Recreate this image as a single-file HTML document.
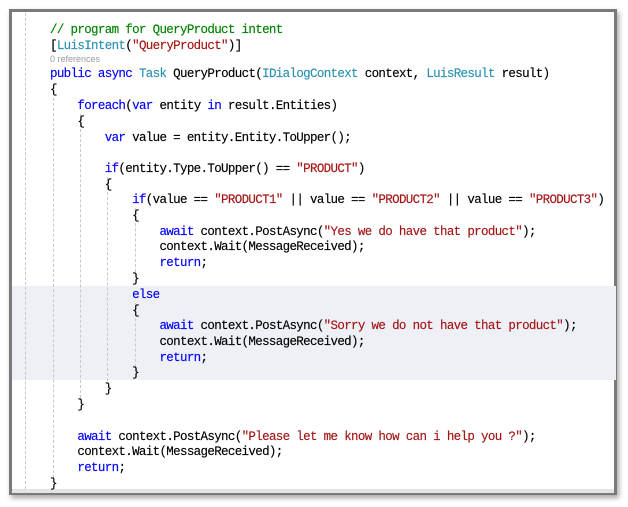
<!DOCTYPE html>
<html><head><style>
body{margin:0;width:628px;height:507px;background:#fff;position:relative;overflow:hidden}
.frame{position:absolute;left:9px;top:9px;width:608px;height:486px;border:3px solid #7a7a7a;box-shadow:2px 3px 5px rgba(0,0,0,.35);background:#fff;box-sizing:border-box}
.strip{position:absolute;left:12px;top:489px;width:602px;height:4px;background:#e4e4e4}
.band{position:absolute;left:12px;top:286px;width:604px;height:94px;background:#eff0f6}
.d{position:absolute;width:0;border-left:1px dashed #c8c8c8}
.l{position:absolute;left:50px;font-family:"Liberation Mono",monospace;font-size:12.5px;letter-spacing:-0.66px;white-space:pre;color:#000;line-height:14px;-webkit-text-stroke:0.15px}
.k{color:#0000ff}.t{color:#2b91af}.s{color:#a31515}.c{color:#008000}
.ref{position:absolute;left:50px;top:54px;font-family:"Liberation Sans",sans-serif;font-size:9px;color:#999}
</style></head><body>
<div class="frame"></div>
<div class="band"></div>
<div class="strip"></div>
<div class="d" style="left:25px;top:13px;height:476px"></div>
<div class="d" style="left:53px;top:98px;height:380px"></div>
<div class="d" style="left:80px;top:114px;height:284px"></div>
<div class="d" style="left:107px;top:177px;height:204px"></div>
<div class="d" style="left:135px;top:208px;height:64px"></div>
<div class="d" style="left:135px;top:303px;height:64px"></div>
<div class="l c" style="top:23px">// program for QueryProduct intent</div>
<div class="l" style="top:39px">[<span class="t">LuisIntent</span>(<span class="s">"QueryProduct"</span>)]</div>
<div class="ref">0 references</div>
<div class="l" style="top:67px"><span class="k">public</span> <span class="k">async</span> <span class="t">Task</span> QueryProduct(<span class="t">IDialogContext</span> context, <span class="t">LuisResult</span> result)</div>
<div class="l" style="top:83px">{</div>
<div class="l" style="top:99px">    <span class="k">foreach</span>(<span class="k">var</span> entity <span class="k">in</span> result.Entities)</div>
<div class="l" style="top:115px">    {</div>
<div class="l" style="top:131px">        <span class="k">var</span> value = entity.Entity.ToUpper();</div>
<div class="l" style="top:162px">        <span class="k">if</span>(entity.Type.ToUpper() == <span class="s">"PRODUCT"</span>)</div>
<div class="l" style="top:178px">        {</div>
<div class="l" style="top:193px">            <span class="k">if</span>(value == <span class="s">"PRODUCT1"</span> || value == <span class="s">"PRODUCT2"</span> || value == <span class="s">"PRODUCT3"</span>)</div>
<div class="l" style="top:209px">            {</div>
<div class="l" style="top:225px">                <span class="k">await</span> context.PostAsync(<span class="s">"Yes we do have that product"</span>);</div>
<div class="l" style="top:240px">                context.Wait(MessageReceived);</div>
<div class="l" style="top:256px">                <span class="k">return</span>;</div>
<div class="l" style="top:272px">            }</div>
<div class="l" style="top:288px">            <span class="k">else</span></div>
<div class="l" style="top:304px">            {</div>
<div class="l" style="top:319px">                <span class="k">await</span> context.PostAsync(<span class="s">"Sorry we do not have that product"</span>);</div>
<div class="l" style="top:335px">                context.Wait(MessageReceived);</div>
<div class="l" style="top:351px">                <span class="k">return</span>;</div>
<div class="l" style="top:366px">            }</div>
<div class="l" style="top:382px">        }</div>
<div class="l" style="top:398px">    }</div>
<div class="l" style="top:430px">    <span class="k">await</span> context.PostAsync(<span class="s">"Please let me know how can i help you ?"</span>);</div>
<div class="l" style="top:445px">    context.Wait(MessageReceived);</div>
<div class="l" style="top:461px">    <span class="k">return</span>;</div>
<div class="l" style="top:477px">}</div>
</body></html>
